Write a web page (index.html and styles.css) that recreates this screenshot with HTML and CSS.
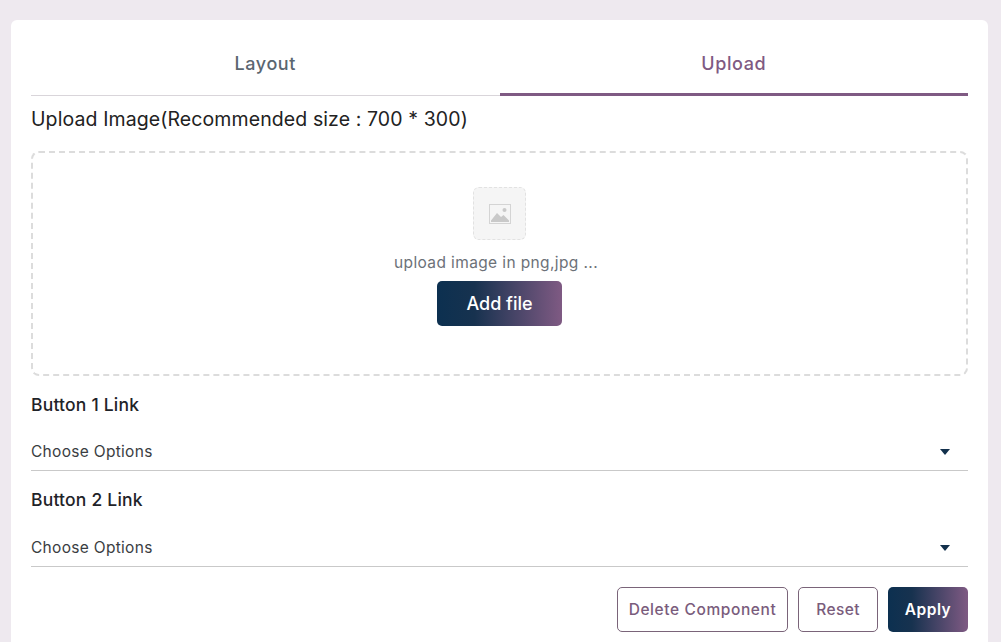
FILE: index.html
```html
<!DOCTYPE html>
<html lang="en">
<head>
<meta charset="utf-8">
<title>Upload</title>
<link rel="stylesheet" href="styles.css">
</head>
<body>
<main class="card">
  <div class="tabs">
    <div class="tab">Layout</div>
    <div class="tab tab-active">Upload</div>
  </div>
  <h2 class="upload-title">Upload Image(Recommended size : 700 * 300)</h2>
  <section class="dropzone">
    <div class="thumb">
      <svg class="thumb-icon" width="22" height="20" viewBox="0 0 22 20">
        <rect x="0.5" y="0.5" width="21" height="19" fill="#f5f5f5" stroke="#d4d4d4"/>
        <path d="M2 16.5 L8 9 L12 13 L14.5 11 L20 16.5 L20 18 L2 18 Z" fill="#c9c9c9"/>
        <circle cx="15.5" cy="6" r="2" fill="#c9c9c9"/>
      </svg>
    </div>
    <p class="hint">upload image in png,jpg ...</p>
    <button class="btn-gradient btn-add">Add file</button>
  </section>
  <label class="field-label label-one">Button 1 Link</label>
  <div class="select select-one"><span>Choose Options</span><i class="caret"></i></div>
  <label class="field-label label-two">Button 2 Link</label>
  <div class="select select-two"><span>Choose Options</span><i class="caret"></i></div>
  <div class="actions">
    <button class="btn-outline btn-delete">Delete Component</button>
    <button class="btn-outline btn-reset">Reset</button>
    <button class="btn-gradient btn-apply">Apply</button>
  </div>
</main>
</body>
</html>
```
FILE: styles.css
```css
* { box-sizing: border-box; }
html, body { height: 100%; }
body {
  margin: 0;
  background: #eee9ef;
  font-family: Inter, "Open Sans", sans-serif;
  overflow: hidden;
}
.card {
  width: 977px;
  height: 640px;
  margin: 20px 0 0 11px;
  padding: 0 20px;
  background: #fff;
  border-radius: 6px 6px 0 0;
  display: flex;
  flex-direction: column;
}
.tabs {
  display: grid;
  grid-template-columns: 1fr 1fr;
  height: 76px;
  border-bottom: 1px solid #d9d5da;
}
.tab {
  padding-top: 33px;
  text-align: center;
  font-size: 18px;
  line-height: 22px;
  font-weight: 500;
  letter-spacing: 0.6px;
  color: #5b6670;
}
.tab-active {
  height: 76px;
  color: #7f5a83;
  border-bottom: 3px solid #7f5a83;
}
.upload-title {
  margin: 11px 0 0;
  font-size: 19.5px;
  line-height: 24px;
  font-weight: 400;
  letter-spacing: 0.1px;
  color: #222;
}
.dropzone {
  margin-top: 20px;
  height: 225px;
  border: 2px dashed #dcdcdc;
  border-radius: 8px;
  display: flex;
  flex-direction: column;
  align-items: center;
  padding-top: 34px;
}
.thumb {
  width: 53px;
  height: 53px;
  background: #f5f5f5;
  border: 1px dashed #e2e2e2;
  border-radius: 6px;
  display: flex;
  align-items: center;
  justify-content: center;
}
.hint {
  margin: 13px 7px 0 0;
  font-size: 15.5px;
  line-height: 20px;
  letter-spacing: 0.38px;
  color: #6c7178;
}
.btn-gradient {
  background: linear-gradient(90deg, #0c3050 0%, #17324f 30%, #7f5a83 100%);
  color: #fff;
  border: 0;
  font-family: inherit;
  border-radius: 5px;
}
.btn-add {
  margin-top: 8px;
  width: 125px;
  height: 45px;
  font-size: 18px;
  font-weight: 500;
}
.field-label {
  font-size: 17.5px;
  line-height: 22px;
  font-weight: 500;
  letter-spacing: 0.2px;
  color: #1f2328;
}
.label-one { margin-top: 18px; }
.label-two { margin-top: 18px; }
.select {
  padding: 26px 18px 0 0;
  border-bottom: 1px solid #c9c9c9;
  display: flex;
  justify-content: space-between;
  font-size: 15.5px;
  line-height: 20px;
  letter-spacing: 0.3px;
  color: #3a3d42;
}
.select-one { height: 55px; }
.select-two { height: 56px; padding-top: 27px; }
.caret {
  width: 0;
  height: 0;
  margin-top: 7px;
  border-left: 5.5px solid transparent;
  border-right: 5.5px solid transparent;
  border-top: 6px solid #12304c;
}
.actions {
  margin-top: 20px;
  display: flex;
  justify-content: flex-end;
  gap: 10px;
}
.actions button {
  height: 45px;
  font-family: inherit;
  font-size: 15.5px;
  font-weight: 500;
  letter-spacing: 0.6px;
}
.btn-outline {
  background: #fff;
  border: 1px solid #7a6479;
  border-radius: 5px;
  color: #7a5c7c;
}
.btn-delete { width: 171px; }
.btn-reset { width: 80px; }
.actions .btn-reset { letter-spacing: 0.4px; }
.btn-apply { width: 80px; }
.actions .btn-apply { font-weight: 600; letter-spacing: 0.5px; }
```
